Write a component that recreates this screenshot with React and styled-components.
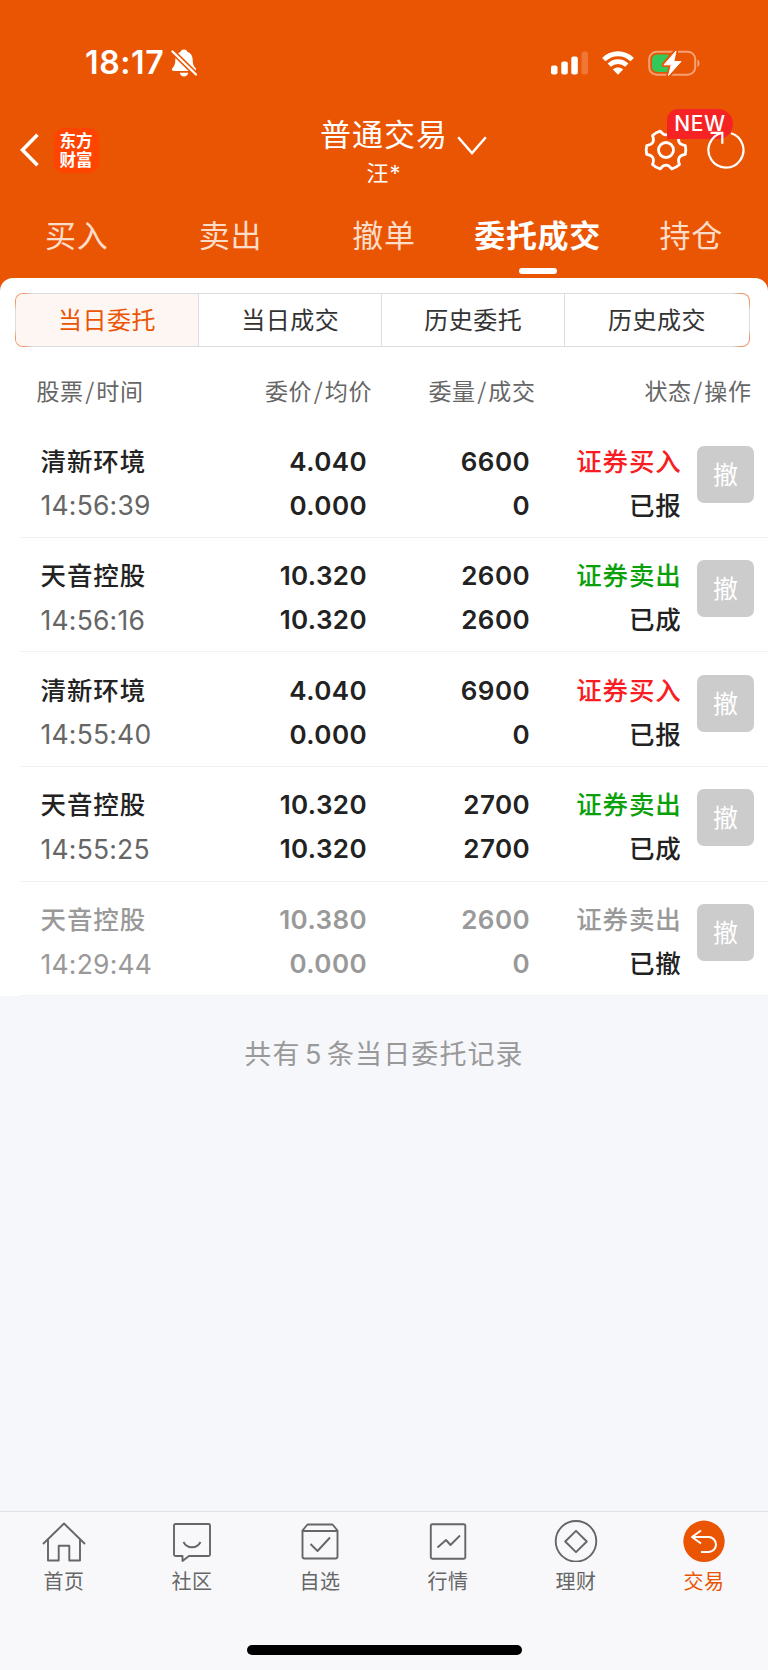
import React from 'react';
import styled, { createGlobalStyle } from 'styled-components';

const ORANGE = '#ea5504';
const cjk = '"Noto Sans CJK SC", sans-serif';
const latin = 'Inter, "Noto Sans CJK SC", sans-serif';

const GlobalStyle = createGlobalStyle`
  * { box-sizing: border-box; }
  body { margin: 0; background: #f6f7fa; }
`;

const Screen = styled.div`
  width: 768px;
  height: 1670px;
  display: flex;
  flex-direction: column;
  background: #f6f7fa;
  font-family: ${cjk};
  color: #222;
  overflow: hidden;
`;

const Header = styled.header`
  background: ${ORANGE};
  color: #fff;
  height: 292px;
  flex: none;
  display: flex;
  flex-direction: column;
`;

const StatusBar = styled.div`
  height: 100px;
  padding: 25px 67.5px 0 85px;
  display: flex;
  align-items: center;
  justify-content: space-between;
`;

const StatusGroup = styled.div`
  display: flex;
  align-items: center;
  gap: ${p => p.$gap || 0}px;
`;

const Clock = styled.span`
  font: 600 32px/40px ${latin};
  letter-spacing: 0.6px;
  margin-right: 7px;
`;

const NavBar = styled.div`
  height: 100px;
  display: grid;
  grid-template-columns: 240px 1fr 240px;
`;

const NavLeft = styled.div`
  display: flex;
  align-items: center;
  padding-left: 20px;
  gap: 14px;
`;

const Logo = styled.div`
  width: 45px;
  height: 45px;
  border-radius: 10px;
  background: #ff4400;
  display: flex;
  justify-content: center;
  padding-top: 3px;
`;

const LogoText = styled.span`
  width: 34px;
  font: 700 16.5px/19px ${cjk};
  word-break: break-all;
`;

const NavTitle = styled.div`
  display: flex;
  justify-content: center;
  padding: 12.5px 0 0 39px;
  gap: 9px;
`;

const AccountText = styled.div`
  display: flex;
  flex-direction: column;
  align-items: center;
`;

const AccountType = styled.span`
  font: 400 31px/40px ${cjk};
  letter-spacing: 1px;
`;

const AccountName = styled.span`
  font: 400 22px/40px ${latin};
  letter-spacing: 1px;
`;

const ChevronSlot = styled.span`
  padding-top: 23.5px;
`;

const NavRight = styled.div`
  display: flex;
  justify-content: flex-end;
  align-items: center;
  padding-right: 23px;
  gap: 19px;
  position: relative;
`;

const NewBadge = styled.span`
  position: absolute;
  left: 139px;
  top: 8.5px;
  width: 66px;
  height: 30px;
  border-radius: 11px 15px 15px 0;
  background: #f52323;
  font: 500 21px/30px ${latin};
  letter-spacing: 0.6px;
  text-align: center;
`;

const RefreshSlot = styled.span`
  position: relative;
  display: flex;
`;

const Tabs = styled.nav`
  display: grid;
  grid-template-columns: repeat(5, 1fr);
  height: 78px;
`;

const Tab = styled.div`
  display: flex;
  flex-direction: column;
  align-items: center;
  justify-content: space-between;
  padding: 12px 0 4px;
  font: ${p => (p.$active ? 700 : 400)} 31px/44px ${cjk};
  letter-spacing: 0.7px;
  color: ${p => (p.$active ? '#fff' : '#fddcc8')};
  &::after {
    content: '';
    width: 38px;
    height: 6px;
    border-radius: 3px;
    background: ${p => (p.$active ? '#fff' : 'transparent')};
  }
`;

const Panel = styled.main`
  background: #fff;
  border-radius: 13px 13px 0 0;
  margin-top: -14px;
  padding-top: 15px;
  height: 718px;
  flex: none;
`;

const cornerTint = at => `radial-gradient(circle at ${at}, #ee9468 0, #ee9468 9px, transparent 18px) border-box`;

const Segments = styled.div`
  display: grid;
  grid-template-columns: repeat(4, 1fr);
  height: 53.5px;
  margin: 0 18.5px 0.5px 15px;
  border: 1.5px solid transparent;
  border-radius: 8px;
  background:
    linear-gradient(#fff, #fff) padding-box,
    ${cornerTint('0 0')}, ${cornerTint('0 100%')},
    ${cornerTint('100% 0')}, ${cornerTint('100% 100%')},
    linear-gradient(#dcdde3, #dcdde3) border-box;
`;

const Segment = styled.div`
  font: 400 24px/50px ${cjk};
  letter-spacing: 0.5px;
  text-align: center;
  color: ${p => (p.$active ? ORANGE : '#333')};
  background: ${p => (p.$active ? '#fef6f3' : 'transparent')};
  border-radius: ${p => (p.$active ? '7px 0 0 7px' : 0)};
  border-right: ${p => (p.$last ? 0 : '1.5px solid #dcdde3')};
`;

const ColumnHeads = styled.div`
  display: grid;
  grid-template-columns: 195px 177px 163.5px 216px;
  padding: 27px 0 0 0;
  height: 76px;
`;

const ColumnHead = styled.span`
  font: 400 23px/32px ${cjk};
  letter-spacing: 0.6px;
  color: #666;
  text-align: ${p => (p.$left ? 'left' : 'right')};
  padding-left: ${p => (p.$left ? '36.5px' : 0)};
  white-space: nowrap;
`;

const Slash = styled.span`
  margin: 0 1.5px;
`;

const OrderRow = styled.div`
  margin-left: 20px;
  height: 114.67px;
  border-bottom: 1.5px solid #f2f2f4;
  display: grid;
  grid-template-columns: 171px 176px 163px 151.5px 72.5px;
  padding-top: 16.5px;
  color: ${p => (p.$cancelled ? '#999' : '#222')};
`;

const Cell = styled.div`
  display: flex;
  flex-direction: column;
  align-items: ${p => (p.$left ? 'flex-start' : 'flex-end')};
  padding-left: ${p => (p.$left ? '20.5px' : 0)};
`;

const StockName = styled.span`
  font: 500 25.5px/44px ${cjk};
  letter-spacing: 0.9px;
  margin: -2px 0 2px;
`;

const OrderTime = styled.span`
  font: 400 26.5px/44px ${latin};
  letter-spacing: 0.2px;
  margin-top: -0.5px;
  color: ${p => (p.$cancelled ? '#999' : '#666')};
`;

const Figure = styled.span`
  font: 600 26px/44px ${latin};
  letter-spacing: 0.4px;
`;

const sideColors = { buy: '#f81d22', sell: '#0aa00a', off: '#999' };

const Side = styled.span`
  font: 500 25.5px/44px ${cjk};
  letter-spacing: 0.8px;
  margin: -2px 0 2px;
  color: ${p => sideColors[p.$side]};
`;

const State = styled(Side)`
  color: #222;
`;

const CancelButton = styled.button`
  justify-self: end;
  margin-top: 6px;
  width: 57px;
  height: 57px;
  border: 0;
  border-radius: 7px;
  padding: 0 0 2px;
  background: #ccc;
  color: #fff;
  font: 400 25px/55px ${cjk};
`;

const Summary = styled.p`
  margin: 0;
  padding-top: 37px;
  flex: 1;
  text-align: center;
  font: 400 27px/40px ${cjk};
  letter-spacing: 1.1px;
  color: #999;
`;

const Count = styled.span`
  font-family: ${latin};
  margin: 0 4.5px;
`;

const BottomBar = styled.footer`
  height: 159px;
  flex: none;
  border-top: 1px solid #e0e1e4;
  background: #f8f8fb;
  display: flex;
  flex-direction: column;
  align-items: center;
  justify-content: space-between;
  padding-bottom: 15px;
`;

const BottomTabs = styled.div`
  width: 100%;
  display: grid;
  grid-template-columns: repeat(6, 1fr);
  padding-top: 6px;
`;

const BottomTab = styled.div`
  display: flex;
  flex-direction: column;
  align-items: center;
  font: 400 20px/28px ${cjk};
  letter-spacing: 0.6px;
  color: ${p => (p.$active ? ORANGE : '#666')};
  svg { margin-bottom: 5px; }
`;

const HomeIndicator = styled.div`
  width: 275px;
  height: 10px;
  border-radius: 5px;
  background: #000;
`;

const BellOff = () => (
  <svg width="26" height="28" viewBox="0 0 26 28">
    <path fill="#fff" d="M13 0.5c1.8 0 3 .9 3.300 2.200 3.600 1.200 5.400 4.300 5.400 8.200 0 4.300 1 6 2.600 7.800.8.900 1 1.500.6 2.300-.3.700-.9.900-1.800.9H2.900c-.9 0-1.500-.2-1.800-.9-.4-.8-.2-1.400.6-2.300 1.600-1.800 2.600-3.500 2.600-7.800 0-3.900 1.800-7 5.400-8.200C10 1.400 11.200.5 13 .5zM8.800 23.800h8.400c-.3 2.200-2 3.700-4.200 3.700s-3.900-1.500-4.200-3.700z" />
    <path stroke={ORANGE} strokeWidth="5.400" d="M0 1 26 26.500" />
    <path stroke="#fff" strokeWidth="2.400" strokeLinecap="round" d="M1.500 2.500 25 25.500" />
  </svg>
);

const Signal = () => (
  <svg width="38" height="24" viewBox="0 0 38 24">
    <rect x="0" y="14.500" width="6.500" height="9" rx="2" fill="#fff" />
    <rect x="10.300" y="10.500" width="6.500" height="13" rx="2" fill="#fff" />
    <rect x="20.300" y="5.500" width="6.500" height="18" rx="2" fill="#fff" />
    <rect x="30.500" y="0.500" width="6.500" height="23" rx="2" fill="#fff" opacity=".2" />
  </svg>
);

const Wifi = () => (
  <svg width="32" height="24" viewBox="0 0 32 24" fill="none" stroke="#fff">
    <path strokeWidth="4.800" d="M1.800 8.600C9.800 .8 22.200 .8 30.200 8.600" />
    <path strokeWidth="4.600" d="M7.200 14.200c5-4.800 12.600-4.800 17.600 0" />
    <path fill="#fff" stroke="none" d="M10.900 18.400c2.900-2.600 7.300-2.600 10.200 0L16 23.800z" />
  </svg>
);

const Battery = () => (
  <svg width="53" height="28" viewBox="0 0 53 28">
    <rect x="1.200" y="2.700" width="46" height="23" rx="7.500" fill="none" stroke="#fff" strokeOpacity=".45" strokeWidth="2" />
    <path d="M49.500 10.500c2.600 1 2.600 6.500 0 7.500z" fill="#fff" fillOpacity=".5" />
    <path d="M9 5.500H20.500V23H9a5 5 0 0 1-5-5v-7.500a5 5 0 0 1 5-5z" fill="#34c759" />
    <path d="M28 2 16 15.800h7.300L20.500 26.500 33 12.500H25.800z" fill="#fff" stroke={ORANGE} strokeWidth="4.500" strokeLinejoin="round" />
    <path d="M28 2 16 15.800h7.300L20.500 26.500 33 12.500H25.800z" fill="#fff" stroke="#fff" strokeWidth="1" strokeLinejoin="round" />
  </svg>
);

const Back = () => (
  <svg width="20" height="34" viewBox="0 0 20 34">
    <path d="M17.500 1.800 2.500 17l15 15.200" fill="none" stroke="#fff" strokeWidth="3.600" />
  </svg>
);

const Chevron = () => (
  <svg width="30" height="20" viewBox="0 0 30 20">
    <path d="M1.200 1.200 15 17 28.800 1.200" fill="none" stroke="#fff" strokeWidth="2.500" />
  </svg>
);

const polar = (deg, r) => {
  const a = (deg * Math.PI) / 180;
  return `${(22 + r * Math.cos(a)).toFixed(2)} ${(22 + r * Math.sin(a)).toFixed(2)}`;
};
const gearPath = `M${polar(-13, 19.8)}${[0, 1, 2, 3, 4, 5]
  .map(k => `Q${polar(60 * k, 20.4)} ${polar(60 * k + 13, 19.8)}Q${polar(60 * k + 30, 11.5)} ${polar(60 * k + 47, 19.8)}`)
  .join('')}Z`;

const Gear = () => (
  <svg width="44" height="44" viewBox="0 0 44 44" fill="none" stroke="#fff" strokeWidth="2.800" strokeLinejoin="round">
    <path d={gearPath} />
    <circle cx="22" cy="22" r="7.500" />
  </svg>
);

const Refresh = () => (
  <svg width="38" height="40" viewBox="0 0 38 40" fill="none" stroke="#fff" strokeWidth="2.200">
    <path d="M24 3.300A17.500 17.500 0 1 1 15 3" />
    <path d="M3.500 2.800H15.300V13.700" />
  </svg>
);

const glyph = { width: 44, height: 44, viewBox: '0 0 44 44', fill: 'none', stroke: '#666', strokeWidth: 1.9, strokeLinejoin: 'round' };

const HomeIcon = () => (
  <svg {...glyph}>
    <path d="M1 26 22 5.500 43 26M6 21.500V42.500h10.700V27.700h10.600V42.500H38V21.500" />
  </svg>
);
const CommunityIcon = () => (
  <svg {...glyph}>
    <path d="M5.500 6h33a1.500 1.500 0 0 1 1.500 1.500v29a1.500 1.500 0 0 1-1.500 1.500H19l-6.500 5v-5h-7A1.500 1.500 0 0 1 4 36.500v-29A1.500 1.500 0 0 1 5.500 6zM13.500 24c3.500 7 13.500 7 17 0" />
  </svg>
);
const WatchIcon = () => (
  <svg {...glyph}>
    <path d="M4.500 12.500 9.500 6.500h25l5 6V38.500a2 2 0 0 1-2 2h-31a2 2 0 0 1-2-2zM4.500 13h35M12.500 26l7 7L32 19.500" />
  </svg>
);
const MarketIcon = () => (
  <svg {...glyph}>
    <rect x="4.800" y="6.300" width="34.500" height="34.500" rx="1.500" />
    <path d="M11.500 29.500 20 22l4.500 5L34 17.500" />
  </svg>
);
const WealthIcon = () => (
  <svg {...glyph}>
    <circle cx="22" cy="23.300" r="20.300" />
    <path d="M22 12.800 32.800 23.500 22 34.200 11.200 23.500z" />
  </svg>
);
const TradeIcon = () => (
  <svg {...glyph} stroke="#fff" strokeWidth="2">
    <circle cx="22" cy="23.300" r="20.700" fill={ORANGE} stroke="none" />
    <path d="M19 12.500 10 19 19 25.500M10.500 19H26.500a7.500 7.500 0 0 1 0 15H19" />
  </svg>
);

const tabs = ['买入', '卖出', '撤单', '委托成交', '持仓'];
const segments = ['当日委托', '当日成交', '历史委托', '历史成交'];
const columns = [['股票', '时间'], ['委价', '均价'], ['委量', '成交'], ['状态', '操作']];
const orders = [
  { name: '清新环境', time: '14:56:39', price: '4.040', avg: '0.000', qty: '6600', filled: '0', side: 'buy', label: '证券买入', state: '已报' },
  { name: '天音控股', time: '14:56:16', price: '10.320', avg: '10.320', qty: '2600', filled: '2600', side: 'sell', label: '证券卖出', state: '已成' },
  { name: '清新环境', time: '14:55:40', price: '4.040', avg: '0.000', qty: '6900', filled: '0', side: 'buy', label: '证券买入', state: '已报' },
  { name: '天音控股', time: '14:55:25', price: '10.320', avg: '10.320', qty: '2700', filled: '2700', side: 'sell', label: '证券卖出', state: '已成' },
  { name: '天音控股', time: '14:29:44', price: '10.380', avg: '0.000', qty: '2600', filled: '0', side: 'off', label: '证券卖出', state: '已撤' },
];
const bottomTabs = [
  ['首页', HomeIcon], ['社区', CommunityIcon], ['自选', WatchIcon],
  ['行情', MarketIcon], ['理财', WealthIcon], ['交易', TradeIcon],
];

export default function App() {
  return (
    <Screen>
      <GlobalStyle />
      <Header>
        <StatusBar>
          <StatusGroup><Clock>18:17</Clock><BellOff /></StatusGroup>
          <StatusGroup $gap={13.5}><Signal /><Wifi /><Battery /></StatusGroup>
        </StatusBar>
        <NavBar>
          <NavLeft>
            <Back />
            <Logo><LogoText>东方财富</LogoText></Logo>
          </NavLeft>
          <NavTitle>
            <AccountText>
              <AccountType>普通交易</AccountType>
              <AccountName>汪*</AccountName>
            </AccountText>
            <ChevronSlot><Chevron /></ChevronSlot>
          </NavTitle>
          <NavRight>
            <Gear />
            <NewBadge>NEW</NewBadge>
            <RefreshSlot><Refresh /></RefreshSlot>
          </NavRight>
        </NavBar>
        <Tabs>
          {tabs.map(t => <Tab key={t} $active={t === '委托成交'}>{t}</Tab>)}
        </Tabs>
      </Header>
      <Panel>
        <Segments>
          {segments.map((s, i) => (
            <Segment key={s} $active={i === 0} $last={i === segments.length - 1}>{s}</Segment>
          ))}
        </Segments>
        <ColumnHeads>
          {columns.map(([a, b], i) => (
            <ColumnHead key={a} $left={i === 0}>{a}<Slash>/</Slash>{b}</ColumnHead>
          ))}
        </ColumnHeads>
        {orders.map(o => (
          <OrderRow key={o.time} $cancelled={o.side === 'off'}>
            <Cell $left>
              <StockName>{o.name}</StockName>
              <OrderTime $cancelled={o.side === 'off'}>{o.time}</OrderTime>
            </Cell>
            <Cell><Figure>{o.price}</Figure><Figure>{o.avg}</Figure></Cell>
            <Cell><Figure>{o.qty}</Figure><Figure>{o.filled}</Figure></Cell>
            <Cell><Side $side={o.side}>{o.label}</Side><State>{o.state}</State></Cell>
            <CancelButton>撤</CancelButton>
          </OrderRow>
        ))}
      </Panel>
      <Summary>共有<Count>5</Count>条当日委托记录</Summary>
      <BottomBar>
        <BottomTabs>
          {bottomTabs.map(([label, Icon]) => (
            <BottomTab key={label} $active={label === '交易'}><Icon />{label}</BottomTab>
          ))}
        </BottomTabs>
        <HomeIndicator />
      </BottomBar>
    </Screen>
  );
}
